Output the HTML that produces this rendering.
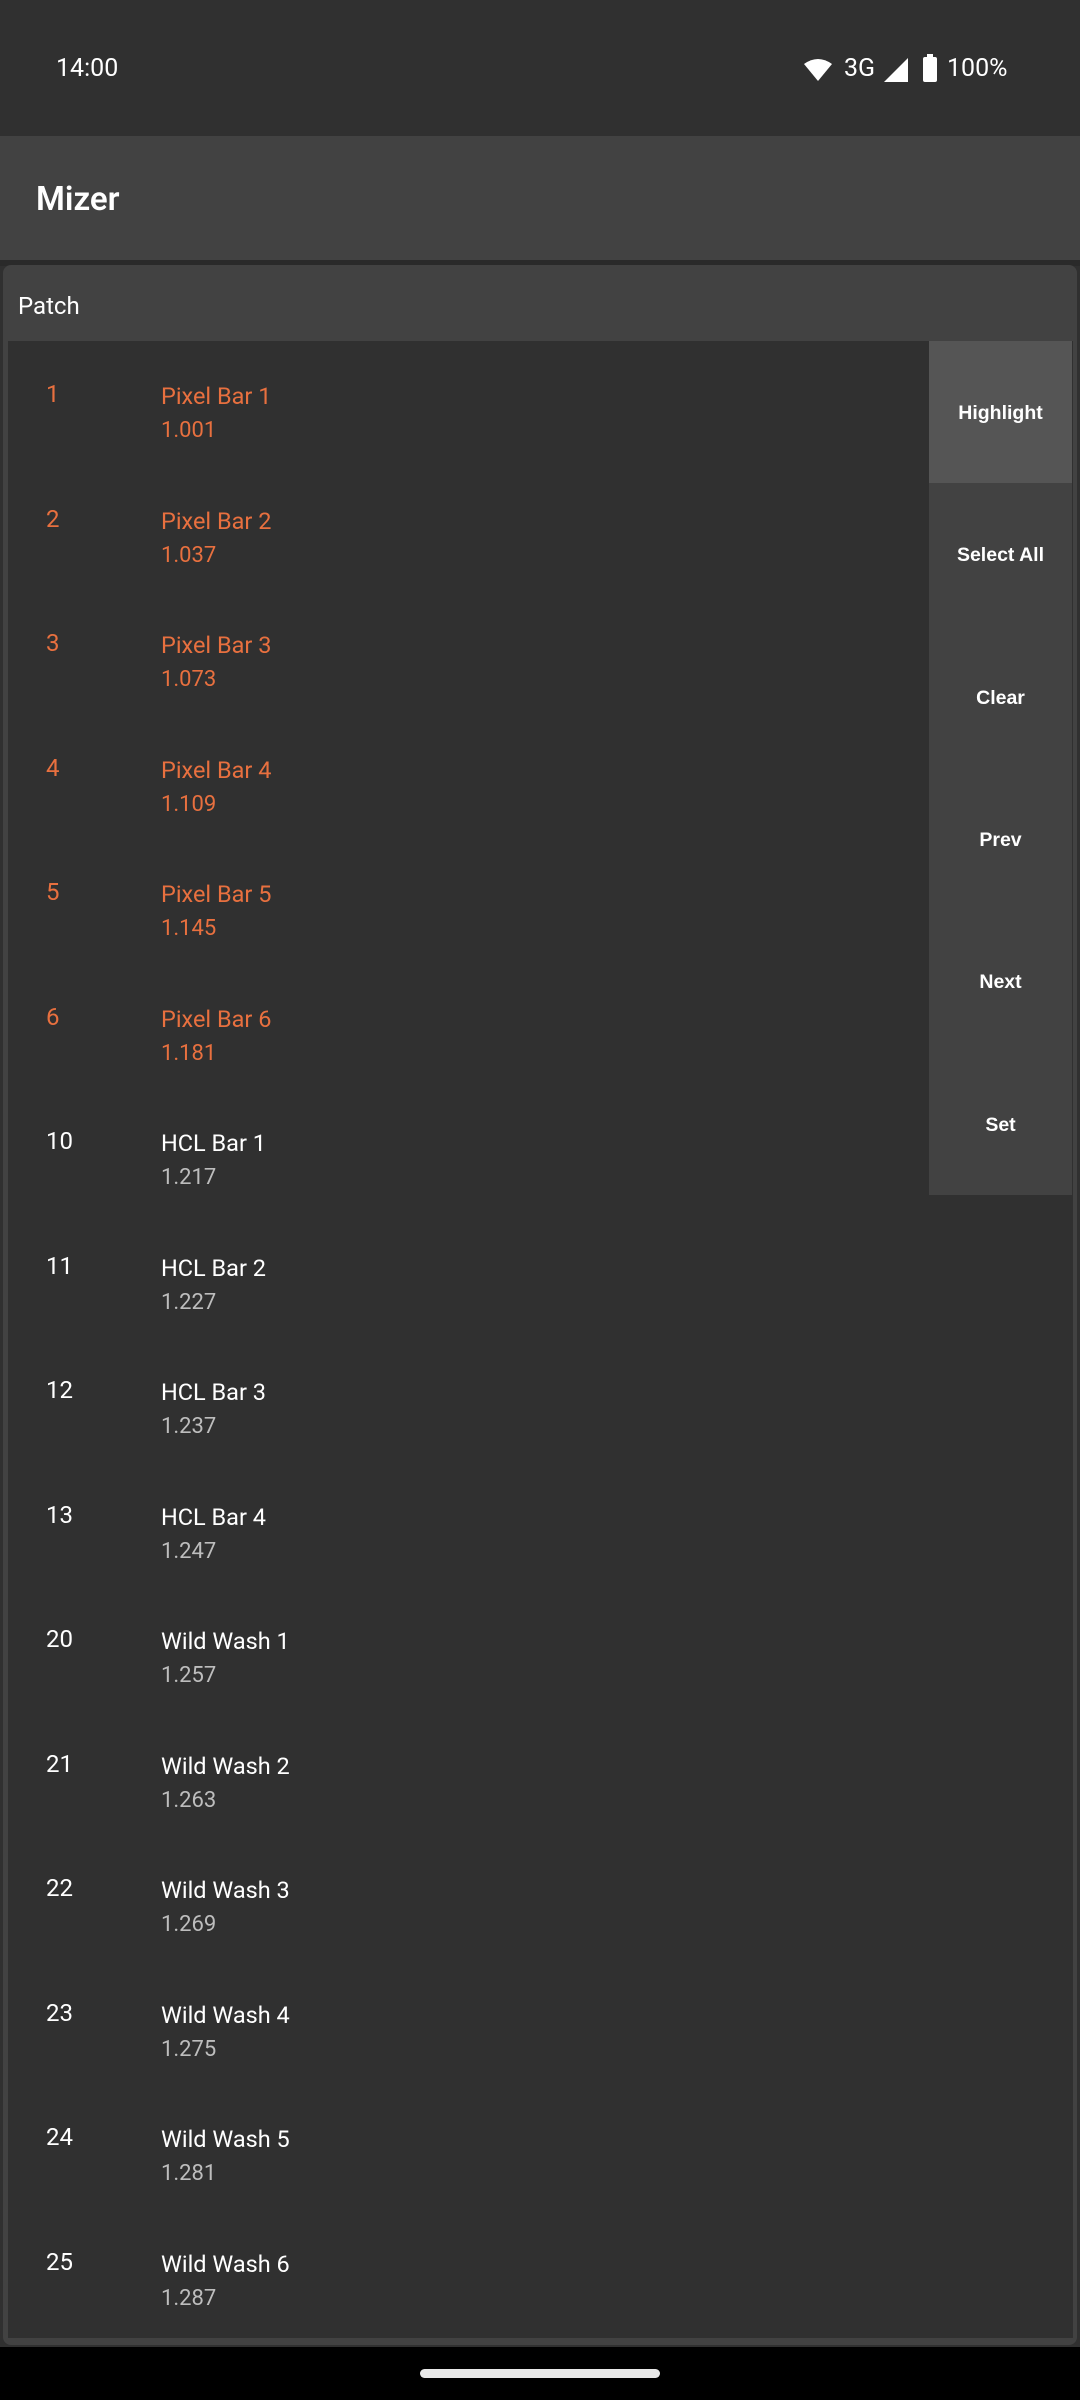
<!DOCTYPE html>
<html><head><meta charset="utf-8"><style>
*{margin:0;padding:0;box-sizing:border-box}
body{width:1080px;height:2400px;background:#303030;font-family:"Roboto","Liberation Sans",sans-serif;color:#fff;position:relative;overflow:hidden}
.sb{position:absolute;left:0;top:0;width:1080px;height:136px;background:#303030}
.time{position:absolute;left:56px;top:54px;font-size:25px}
.ab{position:absolute;left:0;top:136px;width:1080px;height:124px;background:#424242}
.ab span{position:absolute;left:36px;top:44px;font-size:33px;font-weight:600}
.sep{position:absolute;left:0;top:260px;width:1080px;height:6px;background:#2a2a2a}
.card{position:absolute;left:3px;top:265px;width:1074px;height:2080px;background:#424242;border-radius:8px}
.hdr{position:absolute;left:18px;top:292px;font-size:24px}
.list{position:absolute;left:8px;top:341px;width:1065px;height:1997px;background:#303030}
.row{position:absolute;left:0;width:900px;height:125px}
.n{position:absolute;left:38px;top:39px;font-size:24px}
.t{position:absolute;left:153px;top:41px;font-size:23.5px}
.s{position:absolute;left:153px;top:77px;font-size:22px;color:#bdbdbd}
.o .n,.o .t,.o .s{color:#e8703f}
.btns{position:absolute;left:929px;top:341px;width:143px;height:854px;background:#424242}
.b{height:142.3px;display:flex;align-items:center;justify-content:center;padding-top:3px;font-size:19.5px;font-weight:bold;font-family:"Liberation Sans",sans-serif}
.nav{position:absolute;left:0;top:2347px;width:1080px;height:53px;background:#000}
.pill{position:absolute;left:420px;top:2369px;width:240px;height:9px;border-radius:5px;background:#e8e8e8}
</style></head><body>
<div class="sb"><div class="time">14:00</div>
<svg style="position:absolute;left:803px;top:58px" width="30" height="24" viewBox="0 0 30 24"><path d="M1 6 Q15 -4 29 6 L15 23 Z" fill="#fff"/></svg>
<div style="position:absolute;left:844px;top:54px;font-size:25px">3G</div>
<svg style="position:absolute;left:884px;top:58px" width="24" height="24"><path d="M24 0 L24 24 L0 24 Z" fill="#fff"/></svg>
<div style="position:absolute;left:923px;top:57px;width:14px;height:25px;background:#fff;border-radius:2px"></div>
<div style="position:absolute;left:927px;top:54px;width:6px;height:4px;background:#fff"></div>
<div style="position:absolute;left:947px;top:54px;font-size:25px">100%</div>
</div>
<div class="ab"><span>Mizer</span></div>
<div class="sep"></div>
<div class="card"></div>
<div class="hdr">Patch</div>
<div class="list">
<div class="row o" style="top:0"><div class="n">1</div><div class="t">Pixel Bar 1</div><div class="s">1.001</div></div>
<div class="row o" style="top:124.5px"><div class="n">2</div><div class="t">Pixel Bar 2</div><div class="s">1.037</div></div>
<div class="row o" style="top:249px"><div class="n">3</div><div class="t">Pixel Bar 3</div><div class="s">1.073</div></div>
<div class="row o" style="top:373.5px"><div class="n">4</div><div class="t">Pixel Bar 4</div><div class="s">1.109</div></div>
<div class="row o" style="top:498px"><div class="n">5</div><div class="t">Pixel Bar 5</div><div class="s">1.145</div></div>
<div class="row o" style="top:622.5px"><div class="n">6</div><div class="t">Pixel Bar 6</div><div class="s">1.181</div></div>
<div class="row" style="top:747px"><div class="n">10</div><div class="t">HCL Bar 1</div><div class="s">1.217</div></div>
<div class="row" style="top:871.5px"><div class="n">11</div><div class="t">HCL Bar 2</div><div class="s">1.227</div></div>
<div class="row" style="top:996px"><div class="n">12</div><div class="t">HCL Bar 3</div><div class="s">1.237</div></div>
<div class="row" style="top:1120.5px"><div class="n">13</div><div class="t">HCL Bar 4</div><div class="s">1.247</div></div>
<div class="row" style="top:1245px"><div class="n">20</div><div class="t">Wild Wash 1</div><div class="s">1.257</div></div>
<div class="row" style="top:1369.5px"><div class="n">21</div><div class="t">Wild Wash 2</div><div class="s">1.263</div></div>
<div class="row" style="top:1494px"><div class="n">22</div><div class="t">Wild Wash 3</div><div class="s">1.269</div></div>
<div class="row" style="top:1618.5px"><div class="n">23</div><div class="t">Wild Wash 4</div><div class="s">1.275</div></div>
<div class="row" style="top:1743px"><div class="n">24</div><div class="t">Wild Wash 5</div><div class="s">1.281</div></div>
<div class="row" style="top:1867.5px"><div class="n">25</div><div class="t">Wild Wash 6</div><div class="s">1.287</div></div>
</div>
<div class="btns">
<div class="b" style="background:#555">Highlight</div>
<div class="b">Select All</div>
<div class="b">Clear</div>
<div class="b">Prev</div>
<div class="b">Next</div>
<div class="b">Set</div>
</div>
<div class="nav"></div>
<div class="pill"></div>
</body></html>
